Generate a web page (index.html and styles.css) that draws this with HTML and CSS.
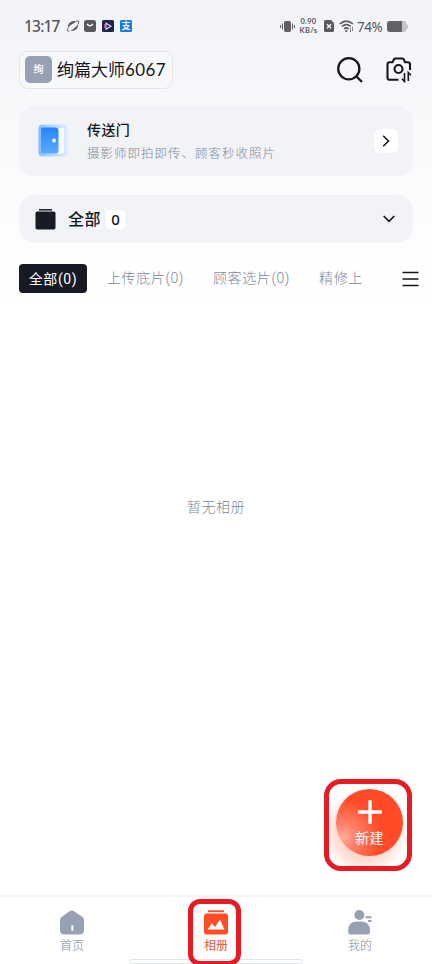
FILE: index.html
```html
<!DOCTYPE html>
<html lang="zh-CN">
<head>
<meta charset="utf-8">
<title>相册</title>
<link rel="stylesheet" href="styles.css">
</head>
<body>
<div class="app">
  <div class="status">
    <span class="time">13:17</span>
    <svg class="s-orbit" width="14" height="14" viewBox="0 0 14 14"><path d="M2 8.500C1.500 4 6 1.300 10 2.300L8 4.300Q5 5 2 8.500Z" fill="#5b5c5f"/><path d="M4.500 11.500c4 1.300 8-2 7.700-6L10 7.500Q8 10 4.500 11.500Z" fill="#5b5c5f"/><path d="M2.600 8.500C.5 11 1 12.700 3.500 12M10 2.300Q12.500 1.300 12.700 2.700 12.800 4 11.700 5.500" fill="none" stroke="#5b5c5f"/></svg>
    <svg width="12" height="12" viewBox="0 0 12 12"><rect width="12" height="12" rx="2.500" fill="#58595c"/><path d="M3 4q3 3.500 6 0" fill="none" stroke="#fff" stroke-width="1.300"/></svg>
    <svg width="12" height="12" viewBox="0 0 12 12"><rect width="12" height="12" rx="1.500" fill="#20234a"/><path d="M4 3.300v6l5-3.100-5-3v3.500" fill="none" stroke="#e5d9f2" stroke-width="1.100"/><path d="M2.700 4v4" stroke="#cc5ba2"/></svg>
    <span class="pay">支</span>
    <div class="right">
      <svg width="15" height="13" viewBox="0 0 15 13"><rect x="4" y="1" width="7" height="11" rx="1.700" fill="#5f6063"/><path d="M2.500 3.500v6M12.500 3.500v6M.6 5v3M14.400 5v3" stroke="#5f6063"/></svg>
      <div class="speed"><span>0.90</span><span>KB/s</span></div>
      <svg class="s-sim" width="10" height="12" viewBox="0 0 10 12"><path d="M1.500 0H7l3 3v7.500q0 1.500-1.500 1.500h-7Q0 12 0 10.500v-9Q0 0 1.500 0Z" fill="#5b5c5f"/><path d="m3 4.200 4 4M7 4.200l-4 4" stroke="#fff" stroke-width="1.300"/></svg>
      <svg class="s-wifi" width="15" height="12" viewBox="0 0 15 12"><path d="M.7 4Q7.300-1.700 14 4M2.800 6.500q4.500-3.800 9 0M5 8.900q2.300-2 4.600 0" fill="none" stroke="#5b5c5f" stroke-width="1.500"/><circle cx="7.300" cy="10.900" r="1.100" fill="#5b5c5f"/><path d="M11.500 8v4M13.500 7v4" stroke="#5b5c5f" stroke-dasharray="1.500 .8"/></svg>
      <span class="pct">74%</span>
      <svg width="21" height="11" viewBox="0 0 21 11"><path d="M3 0h14q2.500 0 2.500 3 1.500 0 1.500 2.500T19.500 8q0 3-2.500 3H3Q0 11 0 8V3q0-3 3-3Z" fill="#c3c4c8"/><path d="M3 0h12v11H3Q0 11 0 8V3q0-3 3-3Z" fill="#626366"/></svg>
    </div>
  </div>

  <header class="top">
    <div class="account"><span class="avatar">绚</span><span>绚篇大师<span class="digits">6067</span></span></div>
    <div class="tools">
      <svg width="26" height="26" viewBox="0 0 26 26" fill="none" stroke="#16171c" stroke-width="2.300"><circle cx="11.800" cy="11.800" r="10.600"/><path d="m19.300 19.300 5.700 5.700"/></svg>
      <svg width="26" height="26" viewBox="0 0 26 26" fill="none" stroke="#16171c" stroke-width="2.100"><path d="M12.500 22.800H3.700Q1.500 22.800 1.500 20.600V7.500q0-2.200 2.200-2.200H6.500l1.500-3q.4-.8 1.300-.8h7q.9 0 1.300.8l1.500 3h2.700q2.200 0 2.200 2.200V13"/><circle cx="12.500" cy="12" r="4"/><path d="M18.500 16v8.500l-2.600-2.700M22.300 24V15.500l2.600 2.700" stroke-width="1.600"/></svg>
    </div>
  </header>

  <section class="portal">
    <svg class="door" width="30" height="34" viewBox="0 0 30 34"><defs><linearGradient id="d" x2="0" y2="1"><stop stop-color="#2484f6"/><stop offset="1" stop-color="#5caaff"/></linearGradient><linearGradient id="f"><stop stop-color="#7dbcff"/><stop offset=".25" stop-color="#a4cfff"/><stop offset="1" stop-color="#dcebfd"/></linearGradient></defs><rect x=".5" y=".5" width="29" height="32" rx="4" fill="url(#f)"/><rect x="17" y="4" width="9" height="25.500" rx="1" fill="#f7faff"/><path d="M4.500 3.500h13q3 0 3 3v20q0 3-3 3h-13q-1.500 0-1.500-1.500V5q0-1.500 1.500-1.500Z" fill="url(#d)"/><circle cx="16" cy="16.500" r="1.900" fill="#fff"/></svg>
    <div class="portal-text"><h2>传送门</h2><p>摄影师即拍即传、顾客秒收照片</p></div>
    <span class="go"><svg width="8" height="12" viewBox="0 0 8 12"><path d="m1.200.8 5.300 5.200-5.300 5.200" fill="none" stroke="#111217" stroke-width="1.500"/></svg></span>
  </section>

  <section class="group">
    <svg width="21" height="21" viewBox="0 0 21 21"><path d="M4 .8h13" stroke="#171b26" stroke-width="1.500"/><rect x=".5" y="2.500" width="20" height="18" rx="1.800" fill="#171b26"/></svg>
    <b>全部</b><span class="count">0</span>
    <svg class="down" width="12" height="8" viewBox="0 0 12 8"><path d="m.7 1 5.300 5.300L11.300 1" fill="none" stroke="#15161c" stroke-width="1.700"/></svg>
  </section>

  <nav class="tabs">
    <span class="tab on">全部(0)</span><span class="tab">上传底片(0)</span><span class="tab">顾客选片(0)</span><span class="tab">精修上</span>
    <svg class="menu" width="17" height="16" viewBox="0 0 17 16"><path d="M.5 1.500h16M.5 8h16M.5 14.500h16" stroke="#15161c" stroke-width="1.700"/></svg>
  </nav>

  <main class="empty">暂无相册</main>

  <div class="create-frame"><button class="create"><svg width="24" height="24" viewBox="0 0 24 24"><path d="M12 1.500v21M1.500 12h21" stroke="#fff" stroke-width="3.400" stroke-linecap="round"/></svg><span>新建</span></button></div>

  <footer class="bar">
    <a class="item"><svg width="26" height="26" viewBox="0 0 26 26"><path d="M10.500 1.200q2.300-1.500 4.600 0l8 5.500q1.900 1.300 1.900 3.600V20q0 4.500-4.500 4.500H5.500Q1 24.500 1 20v-9.700Q1 8 2.900 6.700Z" fill="#98a1b4"/><path d="M13.300 16v4" stroke="#fff" stroke-width="2" stroke-linecap="round"/></svg><span>首页</span></a>
    <a class="item on"><svg width="26" height="26" viewBox="0 0 26 26"><path d="M5 1.200h16" stroke="#ff4c27" stroke-width="1.800"/><rect x="1" y="3.500" width="24" height="21" rx="2.500" fill="#ff4c27"/><path d="m4.500 19.500 4.500-6.300 3 3.800 5-7.500 4.500 10Z" fill="#fff"/></svg><span>相册</span></a>
    <a class="item"><svg width="26" height="26" viewBox="0 0 26 26"><circle cx="12.300" cy="5" r="5" fill="#98a1b4"/><path d="M1.200 22v-1.500q0-9 9-9H14q9 0 9 9V22q0 2.500-2.500 2.500H3.700Q1.200 24.500 1.200 22Z" fill="#98a1b4"/><path d="M18.500 7.200H24.500M21 11h3.500" stroke="#98a1b4" stroke-width="2"/></svg><span>我的</span></a>
    <div class="handle"></div>
    <div class="mark"></div>
  </footer>
</div>
</body>
</html>
```

FILE: styles.css
```css
* { box-sizing: border-box; }
body { margin: 0; font-family: Roboto, "Noto Sans CJK SC", sans-serif; color: #15161c; background: #fff; }
svg { display: block; flex: none; }
.app { position: relative; width: 432px; height: 964px; overflow: hidden; display: flex; flex-direction: column; background: linear-gradient(#f2f3f8 0, #f7f8fa 100px, #fdfdfe 220px, #fff 300px); }
.status { height: 51px; padding: 1px 24px 0; display: flex; align-items: center; color: #56575a; flex: none; }
.time { width: 42px; font: 500 15.5px/20px "Noto Sans", sans-serif; letter-spacing: -.8px; white-space: nowrap; }
.status > svg { margin-right: 6px; }
.status > .s-orbit { margin-right: 4px; }
.pay { width: 12px; height: 12px; border-radius: 1.5px; background: #1778ee; color: #fff; font-size: 9px; font-weight: 700; line-height: 12px; text-align: center; }
.right { margin-left: auto; display: flex; align-items: center; }
.speed { width: 21px; height: 18px; margin: 0 3px 0 3px; display: flex; flex-direction: column; align-items: center; justify-content: space-between; font: 700 7.5px/9px Lato, sans-serif; letter-spacing: .3px; white-space: nowrap; }
.s-sim { margin: 0 5px 0 2px; }
.pct { width: 27px; margin: 1px 3px 0; font: 13.5px/18px "Noto Sans", sans-serif; letter-spacing: -.5px; white-space: nowrap; }
.top { height: 37px; padding: 0 20px 0 19px; display: flex; justify-content: space-between; align-items: center; flex: none; }
.account { width: 154px; height: 38px; border: 1px solid #e2e4e8; border-radius: 9px; padding-left: 5px; display: flex; align-items: center; gap: 5px; font-size: 17px; line-height: 26px; white-space: nowrap; background: #f7f8fa; }
.digits { font-family: Lato, sans-serif; letter-spacing: .4px; }
.avatar { width: 27px; height: 27px; border-radius: 5px; background: #98a1b4; color: #fff; font-size: 10px; font-weight: 500; line-height: 27px; text-align: center; }
.tools { display: flex; gap: 23px; }
.portal { height: 70px; margin: 18px 19px 0; padding: 0 15px 0 19px; border-radius: 16px; background: #f2f3f7; display: flex; align-items: center; flex: none; }
.portal-text { margin: 1px 0 0 19px; }
.portal h2 { margin: 0; font-size: 14px; line-height: 22px; font-weight: 500; letter-spacing: .4px; }
.portal p { margin: 1px 0 0; font-size: 12.5px; line-height: 23px; font-weight: 300; letter-spacing: 1px; color: #7f8799; white-space: nowrap; }
.go { margin-left: auto; width: 24px; height: 24px; border-radius: 6px; background: #fff; display: flex; align-items: center; justify-content: center; }
.group { height: 48px; margin: 19px 19px 0; padding: 0 18px 0 16px; border-radius: 16px; background: #f2f3f7; display: flex; align-items: center; flex: none; }
.group b { margin: 0 0 0 12px; font-size: 16px; line-height: 25px; font-weight: 500; letter-spacing: .5px; }
.count { margin-left: 5px; width: 19px; height: 19px; border-radius: 4px; background: #fff; font: 500 15px/18px "Noto Sans", sans-serif; text-align: center; }
.down { margin-left: auto; }
.tabs { height: 29px; margin: 21px 13px 0 19px; display: flex; align-items: center; flex: none; font-size: 14px; line-height: 31px; letter-spacing: .6px; white-space: nowrap; }
.tab { color: #7f8799; font-weight: 300; margin-right: 29px; }
.tab.on { width: 68px; height: 29px; margin-right: 20px; border-radius: 4px; background: #171a25; color: #fff; font-weight: 400; line-height: 30px; text-align: center; }
.menu { margin-left: auto; }
.empty { flex: 1; padding-top: 203px; font-size: 14px; line-height: 22px; font-weight: 300; letter-spacing: .5px; text-align: center; color: #7f8799; }
.create-frame { position: absolute; left: 324px; top: 779px; width: 88px; height: 92px; border: 5px solid #e61b24; border-radius: 17px; padding: 5px 0 0 7px; background: radial-gradient(circle at 36px 48px, #ffaf9d 0, #ffe0d8 30px, #fff 43px); }
.create { width: 67px; height: 67px; padding: 11px 0 0; border: 0; border-radius: 50%; background: radial-gradient(circle at 7px 48px, #ffab98 0, #ff826a 13px, #ff4b27 38px); color: #fff; display: flex; flex-direction: column; align-items: center; font: 400 14px/20px Roboto, "Noto Sans CJK SC", sans-serif; letter-spacing: .3px; }
.create span { margin-top: 4px; }
.bar { position: relative; height: 69px; flex: none; padding-top: 13px; border-top: 2px solid #f5f5f6; background: #fff; display: grid; grid-template-columns: repeat(3, 1fr); }
.item { display: flex; flex-direction: column; align-items: center; font-size: 12px; line-height: 18px; font-weight: 300; color: #7f8799; }
.item span { margin-top: 1px; }
.item.on { color: #e9533b; font-weight: 400; }
.handle { position: absolute; left: 129px; bottom: 0; width: 174px; height: 5px; border: 1px solid #e0e4e6; border-radius: 3px; background: #fff; }
.mark { position: absolute; left: 188px; top: 2px; width: 53px; height: 67px; border: 5px solid #e61b24; border-radius: 12px; }
```
